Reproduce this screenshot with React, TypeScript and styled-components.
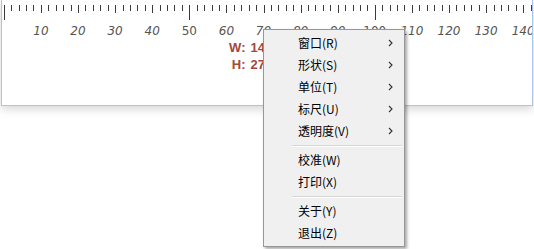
import React from 'react';
import styled, { createGlobalStyle } from 'styled-components';

const Global = createGlobalStyle`
  html, body { margin: 0; padding: 0; background: #ffffff; }
  body { width: 534px; height: 249px; overflow: hidden; }
`;

const Stage = styled.div`
  position: relative;
  width: 534px;
  height: 249px;
  background: #ffffff;
`;

const RulerWindow = styled.div`
  margin-left: 1px;
  width: 532px;
  height: 106px;
  box-sizing: border-box;
  border: 1px solid #a9c7e2;
  border-top: none;
  background: #ffffff;
  box-shadow: 0 3px 9px rgba(0, 0, 0, 0.17);
  display: flex;
  flex-direction: column;
`;

const Scale = styled.svg`
  display: block;
  width: 530px;
  height: 39px;
  flex: none;
`;

const Measures = styled.div`
  display: grid;
  grid-template-columns: auto auto;
  justify-content: center;
  column-gap: 5px;
  padding-right: 6px;
  font-family: 'Liberation Sans', Arial, sans-serif;
  font-weight: bold;
  font-size: 13px;
  line-height: 17px;
  color: #a3483d;
`;

const MeasureLabel = styled.span`
  text-align: right;
`;

const MeasureValue = styled.span`
  text-align: left;
`;

const Menu = styled.div`
  position: absolute;
  left: 263px;
  top: 29px;
  width: 142px;
  box-sizing: border-box;
  border: 1px solid #979797;
  background: #f0f0f0;
  padding: 2px;
  box-shadow: 2px 2px 3px rgba(0, 0, 0, 0.35);
  font-family: 'Noto Sans CJK SC', 'Microsoft YaHei', sans-serif;
  font-size: 12px;
  color: #000000;
`;

const Item = styled.div`
  height: 22px;
  display: flex;
  align-items: center;
  padding-left: 32px;
  padding-right: 9px;
`;

const ItemText = styled.span`
  flex: 1;
  line-height: 22px;
  white-space: nowrap;
`;

const Chevron = styled.svg`
  width: 5px;
  height: 8px;
  display: block;
  flex: none;
`;

const Separator = styled.div`
  height: 7px;
  display: flex;
  align-items: center;
  padding-left: 26px;
  &::before {
    content: '';
    flex: 1;
    height: 1px;
    background: #d7d7d7;
    box-shadow: 0 1px 0 #ffffff;
  }
`;

const X0 = 1.8;
const K = 3.71;

function RulerScale() {
  const ticks: React.ReactNode[] = [];
  for (let u = 0; u <= 146; u += 2) {
    const x = Math.round(X0 + K * u) + 0.5;
    let len = 6;
    if (u % 50 === 0) len = 15;
    else if (u % 10 === 0) len = 8;
    ticks.push(<line key={u} x1={x} x2={x} y1={5} y2={5 + len} stroke="#3a3a3a" strokeWidth={1} />);
  }
  const labels: React.ReactNode[] = [];
  for (let u = 10; u <= 140; u += 10) {
    const x = X0 + K * u;
    labels.push(
      <text
        key={u}
        x={x}
        y={35}
        textAnchor="middle"
        fontFamily="'DejaVu Sans', Verdana, sans-serif"
        fontSize={12}
        fontStyle={u % 50 === 0 ? 'normal' : 'italic'}
        fill="#555555"
      >
        {u}
      </text>
    );
  }
  return (
    <Scale viewBox="0 0 530 39">
      {ticks}
      {labels}
    </Scale>
  );
}

function Arrow() {
  return (
    <Chevron viewBox="0 0 5 8">
      <path d="M1 1 L4 4 L1 7" fill="none" stroke="#333" strokeWidth={1.1} />
    </Chevron>
  );
}

type Entry = { label: string; sub?: boolean } | 'sep';

const entries: Entry[] = [
  { label: '窗口(R)', sub: true },
  { label: '形状(S)', sub: true },
  { label: '单位(T)', sub: true },
  { label: '标尺(U)', sub: true },
  { label: '透明度(V)', sub: true },
  'sep',
  { label: '校准(W)' },
  { label: '打印(X)' },
  'sep',
  { label: '关于(Y)' },
  { label: '退出(Z)' },
];

export default function App() {
  return (
    <Stage>
      <Global />
      <RulerWindow>
        <RulerScale />
        <Measures>
          <MeasureLabel>W:</MeasureLabel>
          <MeasureValue>145 mm</MeasureValue>
          <MeasureLabel>H:</MeasureLabel>
          <MeasureValue>275 mm</MeasureValue>
        </Measures>
      </RulerWindow>
      <Menu>
        {entries.map((e, i) =>
          e === 'sep' ? (
            <Separator key={i} />
          ) : (
            <Item key={i}>
              <ItemText>{e.label}</ItemText>
              {e.sub && <Arrow />}
            </Item>
          )
        )}
      </Menu>
    </Stage>
  );
}
